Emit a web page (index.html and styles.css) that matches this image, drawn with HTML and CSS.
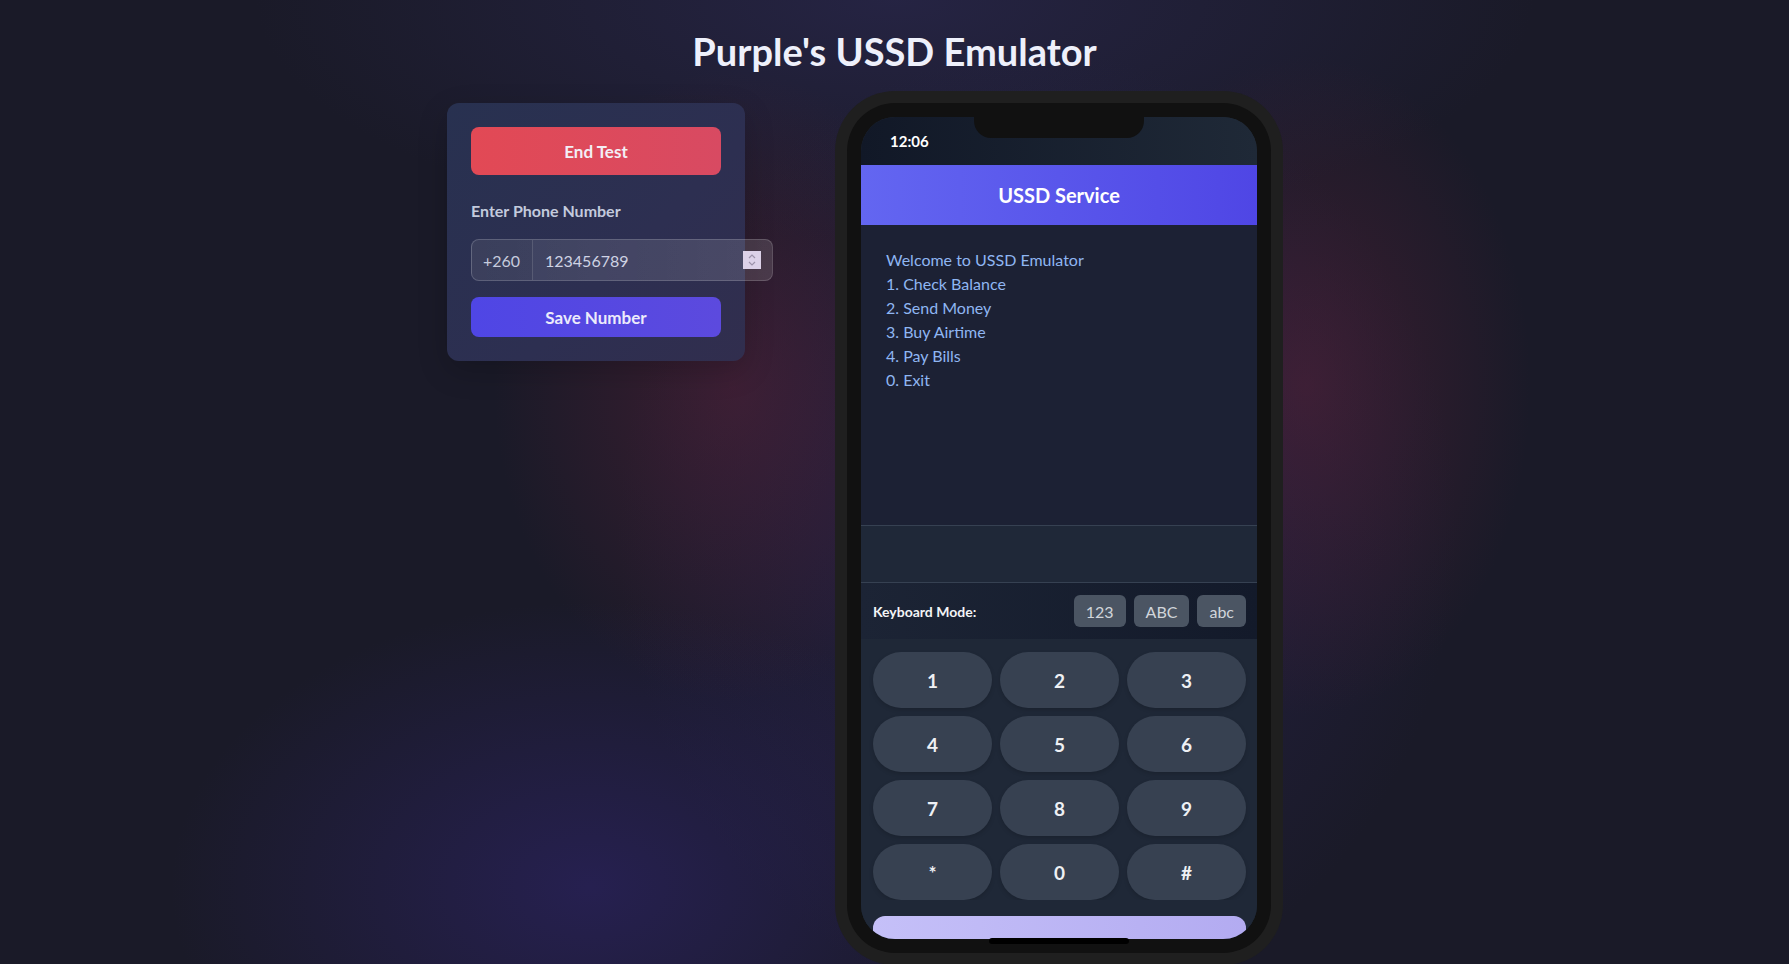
FILE: index.html
```html
<!DOCTYPE html>
<html lang="en">
<head>
<meta charset="utf-8">
<title>Purple's USSD Emulator</title>
<link rel="stylesheet" href="styles.css">
</head>
<body>
<main class="page">
  <h1 class="title">Purple's USSD Emulator</h1>
  <div class="layout">
    <section class="panel">
      <button class="btn btn-end">End Test</button>
      <label class="label">Enter Phone Number</label>
      <div class="phone-input">
        <span class="prefix">+260</span>
        <div class="number">
          <span>123456789</span>
          <span class="spinner">
            <svg width="10" height="14" viewBox="0 0 10 14"><path d="M2 5 L5 2 L8 5 M2 9 L5 12 L8 9" fill="none" stroke="#9c92aa" stroke-width="1.2"/></svg>
          </span>
        </div>
      </div>
      <button class="btn btn-save">Save Number</button>
    </section>

    <div class="phone">
      <div class="phone-inner">
        <div class="notch"></div>
        <div class="screen">
          <div class="status">12:06</div>
          <div class="header">USSD Service</div>
          <div class="content">
            <p>Welcome to USSD Emulator</p>
            <p>1. Check Balance</p>
            <p>2. Send Money</p>
            <p>3. Buy Airtime</p>
            <p>4. Pay Bills</p>
            <p>0. Exit</p>
          </div>
          <div class="input-area"></div>
          <div class="mode-bar">
            <span class="mode-label">Keyboard Mode:</span>
            <div class="mode-buttons">
              <button class="mode-btn">123</button>
              <button class="mode-btn">ABC</button>
              <button class="mode-btn">abc</button>
            </div>
          </div>
          <div class="keypad">
            <button class="key">1</button>
            <button class="key">2</button>
            <button class="key">3</button>
            <button class="key">4</button>
            <button class="key">5</button>
            <button class="key">6</button>
            <button class="key">7</button>
            <button class="key">8</button>
            <button class="key">9</button>
            <button class="key">*</button>
            <button class="key">0</button>
            <button class="key">#</button>
          </div>
          <div class="send-wrap"><div class="send"></div></div>
        </div>
        <div class="home-bar"></div>
      </div>
    </div>
  </div>
</main>
</body>
</html>
```

FILE: styles.css
```css
* { box-sizing: border-box; margin: 0; padding: 0; }

html, body { height: 100%; overflow: hidden; }

body {
  font-family: Lato, "Open Sans", sans-serif;
  color: #e5e7eb;
  background:
    radial-gradient(ellipse 300px 440px at 73% 40%, rgba(105, 35, 60, 0.42), transparent 75%),
    radial-gradient(ellipse 320px 420px at 41% 40%, rgba(105, 35, 60, 0.42), transparent 75%),
    radial-gradient(ellipse 560px 380px at 33% 92%, rgba(50, 38, 120, 0.5), transparent 75%),
    radial-gradient(ellipse 560px 640px at 58% 55%, rgba(48, 38, 95, 0.55), transparent 75%),
    radial-gradient(ellipse 800px 300px at 50% 0%, rgba(45, 42, 85, 0.6), transparent 80%),
    #1a1a28;
}

.page {
  display: flex;
  flex-direction: column;
  align-items: center;
  padding-top: 27px;
}

.title {
  font-size: 38px;
  line-height: 48px;
  font-weight: 700;
  color: #eef0fb;
  margin-bottom: 16px;
}

.layout {
  display: flex;
  align-items: flex-start;
  gap: 90px;
  padding-right: 59px;
}

/* left panel */
.panel {
  width: 298px;
  margin-top: 12px;
  padding: 24px;
  border-radius: 12px;
  background: linear-gradient(135deg, #283150 0%, #2d2f51 60%, #312e4e 100%);
  box-shadow: 0 10px 30px rgba(0, 0, 0, 0.18);
  display: flex;
  flex-direction: column;
}

.btn {
  font-family: inherit;
  border: none;
  width: 250px;
  border-radius: 8px;
  font-size: 17px;
  font-weight: 700;
  color: #f3eef6;
}

.btn-end {
  height: 48px;
  background: linear-gradient(90deg, #e24955, #d84a62);
}

.btn-save {
  height: 40px;
  margin-top: 16px;
  background: linear-gradient(90deg, #4f46e5, #5c4ade);
  color: #ecebfb;
}

.label {
  margin-top: 24px;
  font-size: 16px;
  line-height: 24px;
  font-weight: 700;
  color: #c3cadd;
}

.phone-input {
  margin-top: 16px;
  width: 302px;
  height: 42px;
  display: flex;
  border: 1px solid rgba(255, 255, 255, 0.16);
  border-radius: 8px;
  background: linear-gradient(90deg, rgba(255, 255, 255, 0.09), rgba(255, 255, 255, 0.13));
  overflow: hidden;
  font-size: 16px;
  color: #cfd3e4;
}

.prefix {
  width: 61px;
  display: flex;
  align-items: center;
  padding-left: 11px;
  border-right: 1px solid rgba(255, 255, 255, 0.14);
  background: rgba(0, 0, 0, 0.04);
  color: #c6cbdd;
}

.number {
  flex: 1;
  display: flex;
  align-items: center;
  justify-content: space-between;
  padding: 0 11px 0 12px;
}

.spinner {
  width: 18px;
  height: 18px;
  background: #dcd1e8;
  display: flex;
  align-items: center;
  justify-content: center;
}

/* phone */
.phone {
  width: 448px;
  padding: 12px;
  border-radius: 60px;
  background: #1f1f1f;
}

.phone-inner {
  position: relative;
  padding: 14px;
  border-radius: 48px;
  background: #111111;
}

.notch {
  position: absolute;
  top: 0;
  left: 50%;
  transform: translateX(-50%);
  width: 170px;
  height: 35px;
  background: #111111;
  border-radius: 0 0 17px 17px;
  z-index: 2;
}

.home-bar {
  position: absolute;
  bottom: 9px;
  left: 50%;
  transform: translateX(-50%);
  width: 140px;
  height: 6px;
  border-radius: 3px;
  background: #000000;
  z-index: 2;
}

.screen {
  height: 822px;
  border-radius: 34px;
  overflow: hidden;
  background: #1f2937;
  display: flex;
  flex-direction: column;
}

.status {
  height: 48px;
  flex: none;
  display: flex;
  align-items: center;
  padding: 0 0 0 29px;
  font-size: 15px;
  font-weight: 700;
  color: #ffffff;
  background: linear-gradient(90deg, #111827, #1f2937);
}

.header {
  height: 60px;
  flex: none;
  display: flex;
  align-items: center;
  justify-content: center;
  font-size: 20px;
  font-weight: 700;
  color: #ffffff;
  background: linear-gradient(90deg, #6366f1, #4f46e5);
}

.content {
  height: 300px;
  flex: none;
  padding: 23px 25px;
  background: #1c2134;
  color: #8fb6f2;
  font-size: 16px;
  line-height: 24px;
}

.input-area {
  height: 58px;
  flex: none;
  background: #1f2838;
  border-top: 1px solid #364152;
  border-bottom: 1px solid #364152;
}

.mode-bar {
  height: 56px;
  flex: none;
  display: flex;
  align-items: center;
  justify-content: space-between;
  padding: 0 11px 0 12px;
  background: linear-gradient(90deg, #1c2435, #131a2a);
}

.mode-label {
  font-size: 14px;
  font-weight: 700;
  color: #f3f4f6;
}

.mode-buttons {
  display: flex;
  gap: 8px;
}

.mode-btn {
  font-family: inherit;
  height: 32px;
  padding: 0 12px;
  border: none;
  border-radius: 6px;
  background: #4b5563;
  color: #d1d5db;
  font-size: 16px;
}

.keypad {
  flex: none;
  display: grid;
  grid-template-columns: repeat(3, 1fr);
  grid-auto-rows: 56px;
  gap: 8px;
  padding: 13px 11px 0 12px;
  background: #1f2837;
}

.key {
  font-family: inherit;
  border: none;
  border-radius: 28px;
  background: #374151;
  color: #eef0f4;
  font-size: 19px;
  font-weight: 700;
  box-shadow: 0 2px 4px rgba(0, 0, 0, 0.15);
}

.send-wrap {
  flex: 1;
  padding: 16px 11px 0 12px;
  background: #1f2837;
}

.send {
  height: 48px;
  border-radius: 12px;
  background: linear-gradient(90deg, #c5c0f8, #b3abf1);
}
```
